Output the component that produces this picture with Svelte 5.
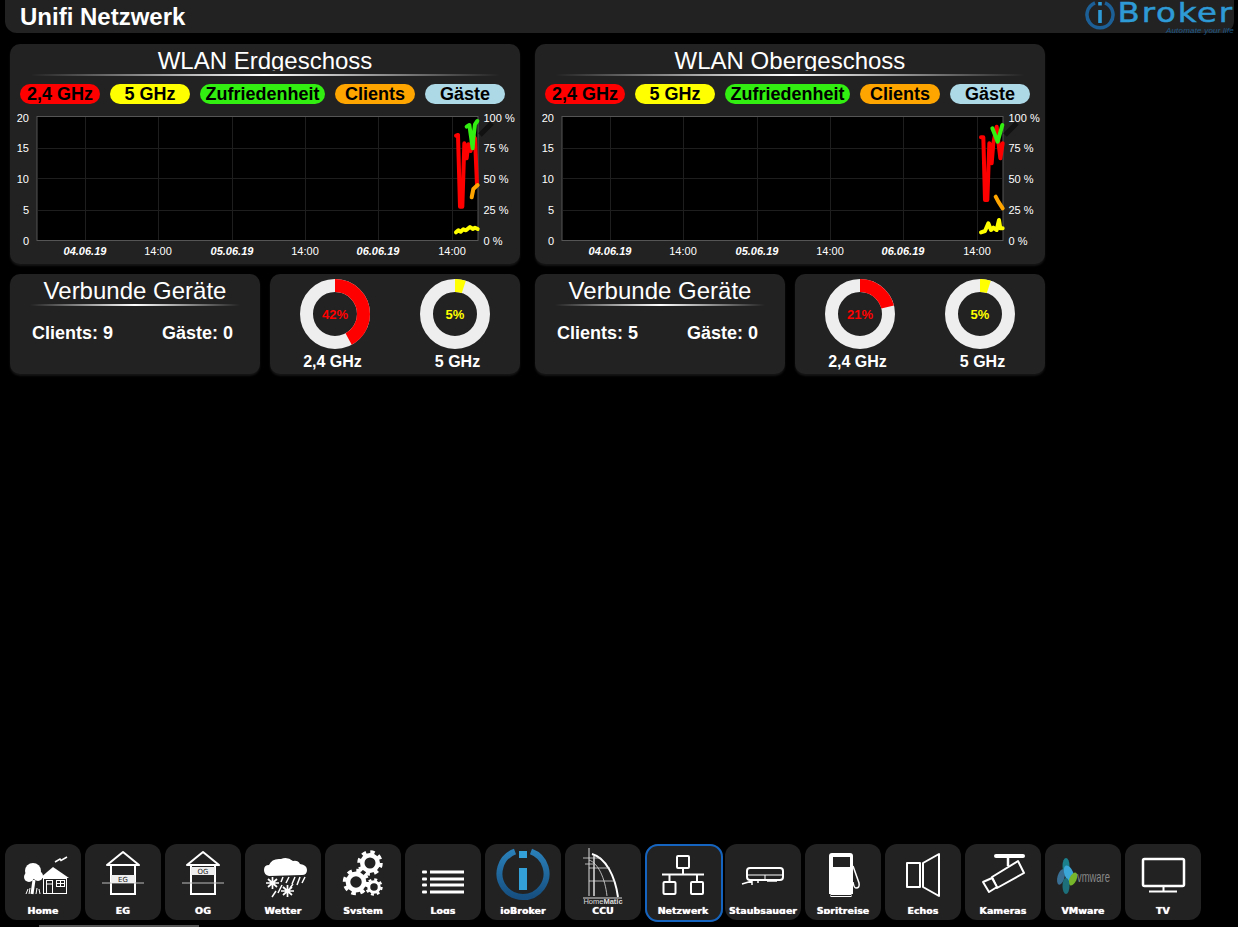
<script>
	const legend = [
		{ label: '2,4 GHz', color: '#ff0000', width: 80 },
		{ label: '5 GHz', color: '#ffff00', width: 80 },
		{ label: 'Zufriedenheit', color: '#33ee11', width: 125 },
		{ label: 'Clients', color: '#ffa500', width: 80 },
		{ label: 'Gäste', color: '#add8e6', width: 80 }
	];

	const floors = [
		{
			title: 'WLAN Erdgeschoss',
			clients: 9,
			guests: 0,
			load24: 42,
			load5: 5,
			red: [[78,92],[84,90],[90,305],[97,305],[103,115],[110,160],[115,118],[122,138],[128,90],[135,100],[141,240]],
			green: [[110,65],[118,60],[128,130],[130,100],[135,58],[142,48]],
			orange: [[125,277],[130,252],[143,240]],
			yellow: [[78,382],[85,376],[92,380],[100,373],[108,376],[120,366],[128,372],[135,368],[143,372]]
		},
		{
			title: 'WLAN Obergeschoss',
			clients: 5,
			guests: 0,
			load24: 21,
			load5: 5,
			red: [[78,97],[85,97],[90,285],[97,285],[103,115],[110,175],[115,115],[125,65],[130,110],[136,160],[143,115]],
			green: [[112,70],[128,110],[142,60]],
			orange: [[122,275],[130,290],[143,310]],
			yellow: [[78,382],[90,378],[100,355],[108,375],[115,368],[125,375],[132,345],[136,370],[143,370]]
		}
	];

	const gridX = [75, 148, 222, 295, 368, 442];
	const gridY = [148, 178, 210];
	const leftTicks = [[20, 118], [15, 148], [10, 179], [5, 210], [0, 241]];
	const rightTicks = [['100 %', 118], ['75 %', 148], ['50 %', 179], ['25 %', 210], ['0 %', 241]];
	const dateTicks = [
		['04.06.19', 75, true], ['14:00', 148, false], ['05.06.19', 222, true],
		['14:00', 295, false], ['06.06.19', 368, true], ['14:00', 442, false]
	];

	const tabs = ['Home', 'EG', 'OG', 'Wetter', 'System', 'Logs', 'ioBroker', 'CCU', 'Netzwerk', 'Staubsauger', 'Spritreise', 'Echos', 'Kameras', 'VMware', 'TV'];

	// traced from the zoomed crop, so x/y are crop pixels (3x)
	function points(list) {
		return list.map(([x, y]) => `${420 + x / 3},${105 + y / 3}`).join(' ');
	}

	function arc(percent, r) {
		const c = 2 * Math.PI * r;
		return `${(c * percent) / 100} ${c}`;
	}
</script>

{#snippet chart(floor)}
	<svg class="chart" width="510" height="152" viewBox="0 110 510 152">
		<rect x="27" y="116.5" width="441" height="124" fill="#000" stroke="#555" />
		{#each gridX as x}
			<line x1={x + 0.5} x2={x + 0.5} y1="117" y2="240" stroke="#1e1e1e" />
		{/each}
		{#each gridY as y}
			<line x1="28" x2="467" y1={y + 0.5} y2={y + 0.5} stroke="#1e1e1e" />
		{/each}
		<line x1="470" y1="135" x2="482" y2="123" stroke="#111" stroke-width="5" />
		<polyline points={points(floor.red)} class="trace" stroke="#ff0000" />
		<polyline points={points(floor.green)} class="trace" stroke="#33ee11" />
		<polyline points={points(floor.orange)} class="trace" stroke="#ffa500" />
		<polyline points={points(floor.yellow)} class="trace" stroke="#ffff00" />
		{#each leftTicks as [label, y]}
			<text x="19" y={y + 4} text-anchor="end">{label}</text>
		{/each}
		{#each rightTicks as [label, y]}
			<text x="473.5" y={y + 4}>{label}</text>
		{/each}
		{#each dateTicks as [label, x, isDate]}
			<text x={x} y="255" text-anchor="middle" class:date={isDate}>{label}</text>
		{/each}
	</svg>
{/snippet}

{#snippet donut(percent, color, label)}
	<div class="gauge">
		<svg width="70" height="70" viewBox="0 0 70 70">
			<circle cx="35" cy="35" r="28.5" fill="none" stroke="#eee" stroke-width="13" />
			<circle cx="35" cy="35" r="28.5" fill="none" stroke={color} stroke-width="13" stroke-dasharray={arc(percent, 28.5)} transform="rotate(-90 35 35)" />
			<text x="35" y="39.5" text-anchor="middle" fill={color} class="gauge-value">{percent}%</text>
		</svg>
		<span>{label}</span>
	</div>
{/snippet}

{#snippet gear(cx, cy, r)}
	<circle cx={cx} cy={cy} r={r * 0.62} fill="none" stroke="#fff" stroke-width={r * 0.36} />
	<circle cx={cx} cy={cy} r={r * 0.88} fill="none" stroke="#fff" stroke-width={r * 0.28} stroke-dasharray={`${r * 0.35} ${r * 0.341}`} />
{/snippet}

{#snippet icon(name)}
	<svg class="icon" width="76" height="60" viewBox="0 0 76 60">
		{#if name === 'Home'}
			<circle cx="28" cy="27" r="8" fill="#fff" />
			<circle cx="24" cy="33" r="5" fill="#fff" />
			<circle cx="33" cy="32" r="5" fill="#fff" />
			<path d="M29 36 L27 50" stroke="#fff" stroke-width="3" />
			<path d="M21 50 L23 45 M24 50 L25 44 M31 50 L32 44 M35 50 L34 45" stroke="#fff" />
			<path d="M35 34 L48 23 L64 34 Z" fill="#fff" />
			<rect x="38.500" y="34.500" width="23" height="15" fill="#222" stroke="#fff" />
			<rect x="41.500" y="36.500" width="6" height="13" fill="none" stroke="#fff" />
			<rect x="51.500" y="36.500" width="8" height="6" fill="none" stroke="#fff" />
			<path d="M42 40 H47 M55.500 36 V42 M51 39.500 H59" stroke="#fff" />
			<path d="M50 18 L55 15 L56 16.500 L62 13" fill="none" stroke="#fff" stroke-width="1.5" />
		{:else if name === 'EG' || name === 'OG'}
			<path d="M22 21 L38 8 L54 21 Z" fill="none" stroke="#fff" stroke-width="2" stroke-linejoin="round" />
			<rect x="26" y="21" width="24" height="29" fill="none" stroke="#fff" stroke-width="2" />
			<path d="M17 39 H59" stroke="#bbb" />
			{#if name === 'EG'}
				<rect x="26" y="31" width="24" height="8" fill="#eee" />
				<text x="38" y="37.5" text-anchor="middle" class="tiny">EG</text>
			{:else}
				<rect x="26" y="23" width="24" height="8" fill="#eee" />
				<text x="38" y="29.5" text-anchor="middle" class="tiny">OG</text>
			{/if}
		{:else if name === 'Wetter'}
			<path d="M24 32 Q19 31 19 26 Q19 21 24 21 Q27 14 36 15 Q42 12 48 17 Q53 16 55 20 Q62 21 62 26 Q62 31 57 31 Z" fill="#fff" />
			<path d="M50 33 L47 40 M55 33 L52 41 M60 33 L57 39 M44 33 L41 39 M38 33 L36 38 M37 41 L33 49 M31 47 L27 53 M48 40 L45 44" stroke="#fff" stroke-width="1.5" />
			<g stroke="#fff" stroke-width="1.7">
				<path d="M21 39 H34 M27.500 33 V45 M23 35 L32 43 M32 35 L23 43" />
				<path d="M36 47 H49 M42.500 41 V53 M38 43 L47 51 M47 43 L38 51" />
			</g>
		{:else if name === 'System'}
			{@render gear(45, 19, 12.5)}
			{@render gear(31, 38, 13)}
			{@render gear(49, 43, 8.5)}
		{:else if name === 'Logs'}
			{#each [28, 35, 41, 48] as y}
				<rect x="17" y={y - 1.500} width="5" height="3" rx="1" fill="#fff" />
				<rect x="25" y={y - 1.500} width="34" height="3" fill="#fff" />
			{/each}
		{:else if name === 'ioBroker'}
			<defs>
				<linearGradient id="ring" x1="0" y1="0" x2="0" y2="1">
					<stop offset="0" stop-color="#2a7fb8" />
					<stop offset="1" stop-color="#164f80" />
				</linearGradient>
			</defs>
			<path d="M30 7.500 A23.500 23.500 0 1 0 46 7.500" fill="none" stroke="url(#ring)" stroke-width="6" />
			<rect x="34" y="7" width="8" height="7" fill="#33a0d8" />
			<rect x="34" y="24" width="8" height="22" fill="#33a0d8" />
		{:else if name === 'CCU'}
			<g fill="none" stroke="#ddd">
				<path d="M24 4 V52" />
				<path d="M27 10 C41 14 50 32 53 53" stroke="#fff" stroke-width="2" />
				<path d="M24 16 C33 19 40 34 42 52 M24 24 H45 M24 37 H50 M18 14 H36 M20 20 H28" stroke-width="0.8" />
				<path d="M29 12 V52" stroke-width="1.5" />
				<path d="M18 54 H57" />
			</g>
			<text x="38" y="60" text-anchor="middle" class="matic">Home<tspan font-weight="700">Matic</tspan></text>
		{:else if name === 'Netzwerk'}
			<g fill="none" stroke="#fff" stroke-width="2">
				<rect x="32" y="12" width="12" height="12" rx="1" />
				<rect x="18.500" y="38" width="12" height="12" rx="1" />
				<rect x="46" y="38" width="12" height="12" rx="1" />
				<path d="M38 24 V30.500 M17 30.500 H59 M24.500 30.500 V38 M52 30.500 V38" />
			</g>
		{:else if name === 'Staubsauger'}
			<g fill="none" stroke="#fff">
				<rect x="22" y="24" width="36" height="12" rx="3" stroke-width="2" />
				<path d="M23 31 H40 V36 M40 31 H57" />
				<path d="M17 40 L27 37 M27 37 V41 M33 37 V39" stroke-width="1.500" />
				<path d="M42 37 H52" stroke-width="1.500" />
			</g>
		{:else if name === 'Spritreise'}
			<path d="M24 12 Q24 9 27 9 H45 Q48 9 48 12 V50 H24 Z" fill="#fff" />
			<rect x="28" y="13" width="17" height="10" fill="#222" />
			<rect x="26" y="50.500" width="20" height="2" fill="none" stroke="#fff" />
			<path d="M48 22 L54 39 Q55 44 51 44 Q49 44 48 38" fill="none" stroke="#fff" stroke-width="1.500" />
		{:else if name === 'Echos'}
			<g fill="none" stroke="#fff" stroke-width="2" stroke-linejoin="round">
				<rect x="22" y="19" width="13" height="24" />
				<path d="M38 19 L54 10 V52 L38 43 Z" />
			</g>
		{:else if name === 'Kameras'}
			<path d="M31 12 H58" stroke="#fff" stroke-width="4" stroke-linecap="round" />
			<path d="M43 14 V22" stroke="#fff" stroke-width="2.500" />
			<g fill="#222" stroke="#fff" stroke-width="2" stroke-linejoin="round">
				<path d="M27 33 L53 17 L59 29 L32 44 Z" />
				<path d="M18 38 L27 34 L32 43 L24 48 Z" />
			</g>
		{:else if name === 'VMware'}
			<ellipse cx="21" cy="22" rx="3.500" ry="8" fill="#1b7f8c" />
			<ellipse cx="16" cy="33" rx="3.500" ry="8" fill="#3a6f94" transform="rotate(15 16 33)" />
			<ellipse cx="24" cy="30" rx="4.500" ry="9" fill="#3aa7d8" transform="rotate(-20 24 30)" />
			<ellipse cx="28" cy="35" rx="3.500" ry="7" fill="#77b52b" transform="rotate(25 28 35)" />
			<ellipse cx="21" cy="42" rx="3.500" ry="8" fill="#1d6f7a" />
			<text x="32" y="38" class="vmw" textLength="33" lengthAdjust="spacingAndGlyphs">vmware</text>
		{:else if name === 'TV'}
			<rect x="18" y="15" width="41" height="27" rx="1.500" fill="none" stroke="#fff" stroke-width="2.500" />
			<path d="M38.500 42 V47 M24 47.500 H52" stroke="#fff" stroke-width="2" />
		{/if}
	</svg>
{/snippet}

<div class="page">
	<header class="topbar">
		<h1>Unifi Netzwerk</h1>
		<div class="logo">
			<svg width="32" height="32" viewBox="0 0 32 32">
				<path d="M11 3.800 A13 13 0 1 0 21 3.800" fill="none" stroke="#1c5f96" stroke-width="3.500" />
				<rect x="14.200" y="3" width="3.600" height="3.500" fill="#2e9ad6" />
				<rect x="14.200" y="11" width="3.600" height="13" fill="#2e9ad6" />
			</svg>
			<div class="logo-words">
				<span class="logo-name">Broker</span>
				<span class="logo-claim">Automate your life</span>
			</div>
		</div>
	</header>

	<main class="floors">
		{#each floors as floor}
			<section class="floor">
				<div class="card">
					<h2>{floor.title}</h2>
					<div class="rule"></div>
					<div class="legend">
						{#each legend as item}
							<span class="pill" style="background: {item.color}; width: {item.width}px">{item.label}</span>
						{/each}
					</div>
					{@render chart(floor)}
				</div>
				<div class="card small">
					<h2>Verbunde Geräte</h2>
					<div class="rule"></div>
					<div class="counts">
						<span>Clients: {floor.clients}</span>
						<span>Gäste: {floor.guests}</span>
					</div>
				</div>
				<div class="card small gauges">
					{@render donut(floor.load24, '#ff0000', '2,4 GHz')}
					{@render donut(floor.load5, '#ffff00', '5 GHz')}
				</div>
			</section>
		{/each}
	</main>

	<nav class="dock">
		{#each tabs as tab}
			<button class="tab" class:active={tab === 'Netzwerk'}>
				{@render icon(tab)}
				<span class="tab-label">{tab}</span>
			</button>
		{/each}
	</nav>

	<div class="scroll-thumb"></div>
</div>

<style>
	:global(body) {
		background: #000;
	}

	.page {
		position: relative;
		display: flex;
		flex-direction: column;
		height: 100vh;
		overflow: hidden;
		font-family: "Liberation Sans", Arial, sans-serif;
		color: #fff;
	}

	.topbar {
		display: flex;
		justify-content: space-between;
		align-items: flex-start;
		height: 33px;
		margin: 0 4px 0 5px;
		padding-left: 15px;
		background: #222;
		border-radius: 0 0 12px 12px;
	}

	h1 {
		margin: 0;
		font-size: 24px;
		line-height: 33px;
		font-weight: 700;
	}

	.logo {
		display: flex;
		align-items: flex-start;
		gap: 2px;
		height: 33px;
	}

	.logo svg {
		margin-top: -1px;
	}

	.logo-words {
		display: flex;
		flex-direction: column;
		align-items: flex-end;
		width: 116px;
	}

	.logo-name {
		font-family: "DejaVu Sans", sans-serif;
		font-size: 27px;
		line-height: 26px;
		letter-spacing: 1.5px;
		color: #2e9ad6;
		-webkit-text-stroke: 0.5px #2e9ad6;
		transform: scaleX(1.2);
		transform-origin: right center;
	}

	.logo-claim {
		margin-top: 1px;
		font-size: 8px;
		line-height: 7px;
		font-style: italic;
		letter-spacing: 0.2px;
		color: #1c5a8a;
		white-space: nowrap;
	}

	.floors {
		display: flex;
		gap: 15px;
		padding: 11px 0 0 10px;
	}

	.floor {
		display: grid;
		grid-template-columns: 250px 250px;
		gap: 10px;
		width: 510px;
	}

	.card {
		grid-column: 1 / 3;
		height: 220px;
		background: #222;
		border-radius: 10px;
		box-shadow: 0 2px 2px #151515;
	}

	.card.small {
		grid-column: auto;
		height: 100px;
	}

	h2 {
		height: 25px;
		margin: 0;
		padding-top: 2px;
		overflow: hidden;
		font-size: 24px;
		line-height: 30px;
		font-weight: 400;
		text-align: center;
	}

	.rule {
		height: 2px;
		margin: 3px 20px 0;
		background: linear-gradient(to right, transparent, #fff 50%, transparent);
	}

	.legend {
		display: flex;
		gap: 10px;
		margin-top: 8px;
		padding-left: 10px;
	}

	.pill {
		height: 20px;
		border-radius: 10px;
		color: #000;
		font-size: 18px;
		font-weight: 700;
		line-height: 20px;
		text-align: center;
		white-space: nowrap;
	}

	.chart {
		display: block;
		margin-top: 6px;
	}

	.chart text {
		fill: #fff;
		font-size: 11px;
	}

	.chart text.date {
		font-weight: 700;
		font-style: italic;
	}

	.trace {
		fill: none;
		stroke-width: 4;
		stroke-linejoin: round;
		stroke-linecap: round;
	}

	.counts {
		display: grid;
		grid-template-columns: 1fr 1fr;
		margin-top: 16px;
		font-size: 18px;
		font-weight: 700;
		line-height: 22px;
		text-align: center;
	}

	.gauges {
		display: grid;
		grid-template-columns: 125px 125px;
		padding-top: 5px;
		box-sizing: border-box;
	}

	.gauge {
		display: flex;
		flex-direction: column;
		align-items: center;
		font-size: 16px;
		font-weight: 700;
		line-height: 20px;
		white-space: nowrap;
	}

	.gauge svg {
		display: block;
		margin-bottom: 3px;
	}

	.gauge:first-child svg {
		margin-left: 5px;
	}

	.gauge:last-child svg {
		margin-right: 5px;
	}

	.gauge-value {
		font-size: 13px;
		font-weight: 700;
	}

	.dock {
		display: flex;
		align-items: flex-start;
		gap: 4px;
		height: 76px;
		margin-top: auto;
		padding: 0 0 7px 5px;
	}

	.tab {
		position: relative;
		flex: none;
		display: flex;
		flex-direction: column;
		width: 76px;
		height: 76px;
		padding: 0;
		border: 0;
		border-radius: 12px;
		background: #222;
		color: #fff;
	}

	.tab.active {
		width: 78px;
		height: 78px;
		margin-right: -2px;
		border-radius: 13px;
		box-shadow: inset 0 0 0 2px #1565c0;
	}

	.icon {
		display: block;
		flex: none;
	}

	.tab-label {
		display: block;
		width: 76px;
		height: 9px;
		margin-top: 1px;
		overflow: hidden;
		font-family: "DejaVu Sans", sans-serif;
		font-size: 9.5px;
		font-weight: 700;
		line-height: 11px;
		text-align: center;
		white-space: nowrap;
		text-shadow: 0 0 1px #fff;
	}

	.tiny {
		font-family: "DejaVu Sans", sans-serif;
		font-size: 7px;
		fill: #222;
	}

	.matic {
		font-size: 7.5px;
		fill: #ddd;
	}

	.vmw {
		font-size: 15px;
		fill: #888;
	}

	.scroll-thumb {
		position: absolute;
		left: 39px;
		bottom: 0;
		width: 160px;
		height: 2px;
		background: #555;
	}
</style>
